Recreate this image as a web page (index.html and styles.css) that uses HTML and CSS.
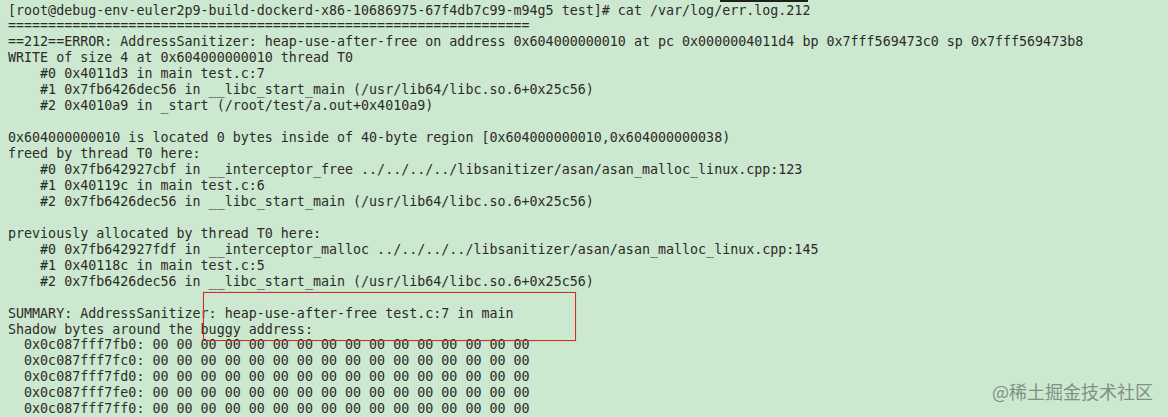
FILE: index.html
```html
<!DOCTYPE html>
<html lang="en">
<head>
<meta charset="utf-8">
<title>err.log.212</title>
<link rel="stylesheet" href="styles.css">
</head>
<body>
<div class="screen">
  <div class="sel-bar"></div>
  <div class="term">
    <div class="ln">[root@debug-env-euler2p9-build-dockerd-x86-10686975-67f4db7c99-m94g5 test]# cat /var/log/err.log.212</div>
    <div class="ln">=================================================================</div>
    <div class="ln">==212==ERROR: AddressSanitizer: heap-use-after-free on address 0x604000000010 at pc 0x0000004011d4 bp 0x7fff569473c0 sp 0x7fff569473b8</div>
    <div class="ln">WRITE of size 4 at 0x604000000010 thread T0</div>
    <div class="ln">    #0 0x4011d3 in main test.c:7</div>
    <div class="ln">    #1 0x7fb6426dec56 in __libc_start_main (/usr/lib64/libc.so.6+0x25c56)</div>
    <div class="ln">    #2 0x4010a9 in _start (/root/test/a.out+0x4010a9)</div>
    <div class="ln blank"></div>
    <div class="ln">0x604000000010 is located 0 bytes inside of 40-byte region [0x604000000010,0x604000000038)</div>
    <div class="ln">freed by thread T0 here:</div>
    <div class="ln">    #0 0x7fb642927cbf in __interceptor_free ../../../../libsanitizer/asan/asan_malloc_linux.cpp:123</div>
    <div class="ln">    #1 0x40119c in main test.c:6</div>
    <div class="ln">    #2 0x7fb6426dec56 in __libc_start_main (/usr/lib64/libc.so.6+0x25c56)</div>
    <div class="ln blank"></div>
    <div class="ln">previously allocated by thread T0 here:</div>
    <div class="ln">    #0 0x7fb642927fdf in __interceptor_malloc ../../../../libsanitizer/asan/asan_malloc_linux.cpp:145</div>
    <div class="ln">    #1 0x40118c in main test.c:5</div>
    <div class="ln">    #2 0x7fb6426dec56 in __libc_start_main (/usr/lib64/libc.so.6+0x25c56)</div>
    <div class="ln blank"></div>
    <div class="ln">SUMMARY: AddressSanitizer: heap-use-after-free test.c:7 in main</div>
    <div class="ln">Shadow bytes around the buggy address:</div>
    <div class="ln">  0x0c087fff7fb0: 00 00 00 00 00 00 00 00 00 00 00 00 00 00 00 00</div>
    <div class="ln">  0x0c087fff7fc0: 00 00 00 00 00 00 00 00 00 00 00 00 00 00 00 00</div>
    <div class="ln">  0x0c087fff7fd0: 00 00 00 00 00 00 00 00 00 00 00 00 00 00 00 00</div>
    <div class="ln">  0x0c087fff7fe0: 00 00 00 00 00 00 00 00 00 00 00 00 00 00 00 00</div>
    <div class="ln">  0x0c087fff7ff0: 00 00 00 00 00 00 00 00 00 00 00 00 00 00 00 00</div>
  </div>
  <div class="highlight-box"></div>
  <div class="watermark">@稀土掘金技术社区</div>
</div>
</body>
</html>
```

FILE: styles.css
```css
html, body {
  margin: 0;
  padding: 0;
  background: #cce8cf;
}

.screen {
  position: relative;
  width: 1168px;
  height: 417px;
  overflow: hidden;
  background: #cce8cf;
}

.term {
  display: flex;
  flex-direction: column;
  align-items: flex-start;
  padding: 2.5px 0 0 8px;
  font-family: "DejaVu Sans Mono", monospace;
  font-size: 13.33px;
  line-height: 15.95px;
  color: #2b2b2b;
}

.ln {
  white-space: pre;
  width: max-content;
}

.ln.blank {
  height: 15.95px;
}

.sel-bar {
  position: absolute;
  left: 720px;
  top: 0;
  width: 88px;
  height: 2px;
  background: #1e1e1e;
}

.highlight-box {
  position: absolute;
  left: 203px;
  top: 292px;
  width: 371px;
  height: 47px;
  border: 1.5px solid #d42a24;
  box-shadow: 0 0 1px rgba(230, 80, 70, 0.5);
}

.watermark {
  position: absolute;
  right: 15px;
  top: 379px;
  font-family: "Noto Sans CJK SC", sans-serif;
  font-size: 18px;
  line-height: 24px;
  color: #7f9181;
}
```
